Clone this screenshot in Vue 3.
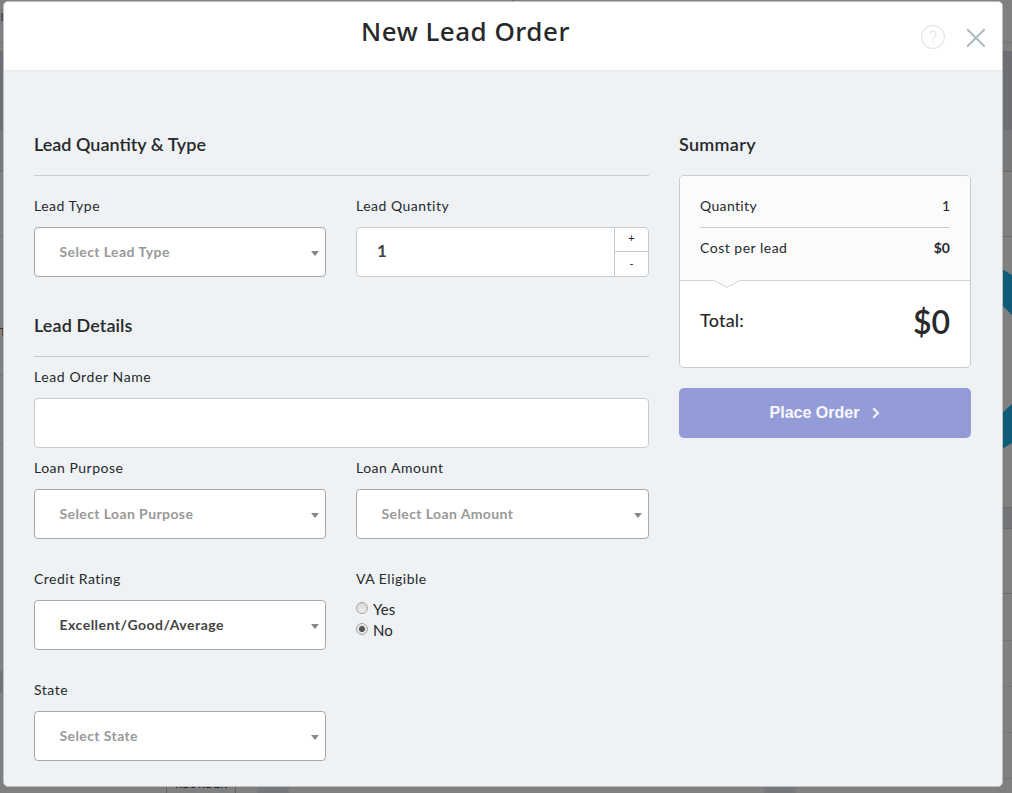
<script setup>
import { ref } from 'vue'

const quantity = ref(1)
const orderName = ref('')
const vaEligible = ref('No')
const changeQuantity = (step) => {
  quantity.value = Math.max(1, quantity.value + step)
}
</script>

<template>
  <div class="page">
    <svg class="backdrop" width="1012" height="793" viewBox="0 0 1012 793" aria-hidden="true">
      <rect width="1012" height="793" fill="#808080" />
      <g shape-rendering="crispEdges">
        <rect y="42" width="1012" height="1" fill="#727272" />
        <rect y="51" width="1012" height="79" fill="#6e6e75" />
        <rect y="130" width="1012" height="41" fill="#76787a" />
        <rect y="171" width="1012" height="1" fill="#696a6b" />
        <rect y="236" width="1012" height="1" fill="#6c6c6c" />
        <path d="M0 306.500H5M0 375.500H5M0 444.500H5M0 513.500H5M0 582.500H5M0 757.500H5" stroke="#747474" />
        <rect y="671" width="6" height="22" fill="#727376" />
        <rect x="998" y="507" width="14" height="22" fill="#737477" />
        <path d="M998 507.500H1012M998 528.500H1012M998 593.500H1012" stroke="#6a6a6a" />
        <path d="M998 640.500H1012M998 686.500H1012M998 732.500H1012M998 778.500H1012" stroke="#757575" />
        <rect x="1" y="13" width="3" height="8" fill="#4c515c" />
        <path d="M0 328.500H3" stroke="#333" />
        <path d="M2.500 329V336" stroke="#6b4634" />
        <rect x="257" y="780" width="32" height="13" fill="#75777a" />
        <rect x="764" y="780" width="32" height="13" fill="#75777a" />
        <path d="M166.500 780V793M235.500 780V793" stroke="#606060" />
        <path d="M512.500 0V4" stroke="#606060" />
      </g>
      <path d="M1002 269L1012 275V315L1002 305ZM1002 413L1012 404V443L1002 449Z" fill="#0f5c78" />
      <text x="175" y="788" class="reorder">REORDER</text>
    </svg>

    <div class="modal">
      <header class="modal-header">
        <h1>New Lead Order</h1>
        <div class="actions">
          <svg width="24" height="24" viewBox="0 0 24 24" fill="none" stroke="#e2e4e5">
            <circle cx="12" cy="12" r="11.400" stroke-width="1.200" />
            <path d="M8.900 9.200C8.900 5.300 15 5.400 15 9C15 11.300 12 11.600 12 14.300" stroke-width="1.300" />
            <path d="M12 16.200V17.800" stroke-width="1.500" />
          </svg>
          <svg width="20" height="20" viewBox="0 0 20 20" stroke="#b0bbc4" stroke-width="2.100" stroke-linecap="round">
            <path d="M1.700 1.700L18.100 18.100M18.100 1.700L1.700 18.100" />
          </svg>
        </div>
      </header>

      <main class="modal-body">
        <form class="form" @submit.prevent>
          <h2>Lead Quantity &amp; Type</h2>
          <div class="row first">
            <div class="field">
              <label>Lead Type</label>
              <div class="select"><span>Select Lead Type</span><i class="caret"></i></div>
            </div>
            <div class="field">
              <label>Lead Quantity</label>
              <div class="stepper">
                <span class="value">{{ quantity }}</span>
                <div class="steps">
                  <button type="button" @click="changeQuantity(1)">+</button>
                  <button type="button" @click="changeQuantity(-1)">-</button>
                </div>
              </div>
            </div>
          </div>

          <h2 class="details">Lead Details</h2>
          <div class="field name">
            <label>Lead Order Name</label>
            <input v-model="orderName" class="input" type="text" />
          </div>
          <div class="row purpose">
            <div class="field">
              <label>Loan Purpose</label>
              <div class="select"><span>Select Loan Purpose</span><i class="caret"></i></div>
            </div>
            <div class="field">
              <label>Loan Amount</label>
              <div class="select"><span>Select Loan Amount</span><i class="caret"></i></div>
            </div>
          </div>
          <div class="row">
            <div class="field">
              <label>Credit Rating</label>
              <div class="select chosen"><span>Excellent/Good/Average</span><i class="caret"></i></div>
            </div>
            <div class="field">
              <label>VA Eligible</label>
              <div class="radios">
                <div v-for="option in ['Yes', 'No']" :key="option" class="radio" @click="vaEligible = option">
                  <i class="dot" :class="{ on: vaEligible === option }"></i><span>{{ option }}</span>
                </div>
              </div>
            </div>
          </div>
          <div class="row">
            <div class="field">
              <label>State</label>
              <div class="select"><span>Select State</span><i class="caret"></i></div>
            </div>
          </div>
        </form>

        <aside class="summary">
          <h3>Summary</h3>
          <div class="card">
            <div class="lines">
              <div class="line"><span>Quantity</span><b class="count">{{ quantity }}</b></div>
              <div class="line"><span class="cost">Cost per lead</span><b>$0</b></div>
              <svg class="notch" width="26" height="9" viewBox="0 0 26 9">
                <path d="M0 0H26V1L13 8L0 1Z" fill="#fbfbfb" />
                <path d="M.500 .500L13 7.500L25.500 .500" fill="none" stroke="#ccd3d9" />
              </svg>
            </div>
            <div class="total"><span>Total:</span><strong>$0</strong></div>
          </div>
          <button class="place" type="button">
            <span>Place Order</span>
            <svg width="8" height="12" viewBox="0 0 8 12" fill="none" stroke="#f4f5fc" stroke-width="2">
              <path d="M1.300 1.200L6 6L1.300 10.800" />
            </svg>
          </button>
        </aside>
      </main>
    </div>
  </div>
</template>

<style>
body {
  overflow: hidden;
}
</style>

<style scoped>
* {
  box-sizing: border-box;
}
.page {
  position: relative;
  width: 1012px;
  height: 793px;
  padding: 1px 9px 6px 3px;
  overflow: hidden;
  font-family: Lato, "Liberation Sans", sans-serif;
  color: #27292b;
}
.backdrop {
  position: absolute;
  inset: 0;
}
.reorder {
  font: 700 11px Lato, sans-serif;
  letter-spacing: 0.2px;
  fill: #20242c;
}
.modal {
  position: relative;
  height: 786px;
  border: 1px solid #bcbebf;
  border-radius: 5px;
  background: #eef2f5;
  overflow: hidden;
}
.modal-header {
  position: relative;
  height: 69px;
  border-bottom: 1px solid #e9ebec;
  background: #fff;
}
h1 {
  margin: 0;
  padding: 11px 75px 0 0;
  text-align: center;
  font: 500 26px/36px "Noto Sans", sans-serif;
  letter-spacing: 0.5px;
  color: #26282a;
}
.actions {
  position: absolute;
  top: 23px;
  right: 16px;
  display: flex;
  gap: 21px;
}
.actions svg:last-child {
  margin-top: 3px;
}
.modal-body {
  display: flex;
  gap: 30px;
  padding: 62px 31px 0 30px;
}
.form {
  width: 615px;
}
h2,
h3 {
  margin: 0;
  height: 43px;
  border-bottom: 1px solid #c9cccf;
  font-size: 18px;
  line-height: 22px;
  font-weight: 600;
}
h2.details {
  margin-top: 37px;
  letter-spacing: 0.1px;
}
h3 {
  height: 42px;
  border: 0;
  letter-spacing: 0.3px;
}
.row {
  display: grid;
  grid-template-columns: 292px 293px;
  column-gap: 30px;
  margin-top: 30px;
}
.row.first {
  margin-top: 20px;
}
.row.purpose,
.name {
  margin-top: 10px;
}
label {
  display: block;
  height: 20px;
  margin-bottom: 11px;
  font-size: 14px;
  line-height: 20px;
  letter-spacing: 0.5px;
}
.name label {
  letter-spacing: 0.6px;
}
.select,
.stepper,
.input {
  display: flex;
  align-items: center;
  width: 100%;
  height: 50px;
  border: 1px solid #a9a9a9;
  border-radius: 4px;
  background: #fff;
}
.select {
  justify-content: space-between;
  padding: 0 6px 0 24.5px;
  font-size: 14px;
  font-weight: 700;
  letter-spacing: 0.4px;
  color: #999;
}
.select span {
  margin-top: -2px;
}
.select.chosen {
  color: #444;
  letter-spacing: 0.5px;
}
.caret {
  margin-top: 3px;
  border: 4px solid transparent;
  border-top: 5px solid #888;
  border-bottom: 0;
}
.input,
.stepper {
  border-color: #c9cccf;
}
.input {
  display: block;
  outline: 0;
}
.stepper {
  padding-left: 20px;
  justify-content: space-between;
}
.value {
  margin-top: -3px;
  font-size: 17px;
  font-weight: 700;
  color: #444;
}
.steps {
  display: flex;
  flex-direction: column;
  width: 34px;
  height: 48px;
  border-left: 1px solid #c9cccf;
}
.steps button {
  height: 24px;
  padding: 0 0 3px;
  border: 0;
  background: none;
  font: 11px/12px Lato, sans-serif;
  color: #222;
}
.steps button:first-child {
  padding-bottom: 4px;
  border-bottom: 1px solid #c9cccf;
}
.steps button:last-child {
  padding-bottom: 1px;
}
.radios {
  margin-top: -1px;
}
.radio {
  display: flex;
  height: 21px;
  font-size: 15px;
  line-height: 20px;
}
.dot {
  width: 12px;
  height: 12px;
  margin: 3px 5px 0 0;
  border: 1px solid #a5a5a5;
  border-radius: 50%;
  background: linear-gradient(#d8d8d8, #eee);
}
.dot.on {
  background: radial-gradient(circle, #555 0 2.6px, #e4e4e4 3.4px);
}
.summary {
  width: 292px;
}
.card {
  height: 193px;
  border: 1px solid #c9cccf;
  border-radius: 5px;
  background: #fff;
}
.lines {
  position: relative;
  height: 105px;
  padding: 10px 20px 0;
  border-bottom: 1px solid #ccd3d9;
  border-radius: 4px 4px 0 0;
  background: #fbfbfb;
}
.line {
  display: flex;
  justify-content: space-between;
  height: 42px;
  font-size: 14px;
  line-height: 40px;
  letter-spacing: 0.35px;
}
.line:first-child {
  border-bottom: 1px solid #c9cccf;
}
.line .cost {
  letter-spacing: 0.5px;
}
.line b {
  letter-spacing: 0;
}
.line .count {
  font-weight: 500;
}
.notch {
  position: absolute;
  left: 34px;
  top: 104px;
}
.total {
  display: flex;
  justify-content: space-between;
  align-items: center;
  height: 80px;
  padding: 0 20px;
}
.total span {
  margin-top: -2px;
  font-size: 18px;
  font-weight: 500;
  letter-spacing: 0.2px;
}
.total strong {
  font-size: 32px;
  font-weight: 600;
}
.place {
  display: flex;
  align-items: center;
  justify-content: center;
  gap: 13px;
  width: 292px;
  height: 50px;
  margin-top: 20px;
  padding: 0;
  border: 0;
  border-radius: 5px;
  background: #949cd8;
  color: #f8f8fe;
  font: 700 16px "Liberation Sans", sans-serif;
}
.place svg {
  margin-top: -1px;
}
</style>
